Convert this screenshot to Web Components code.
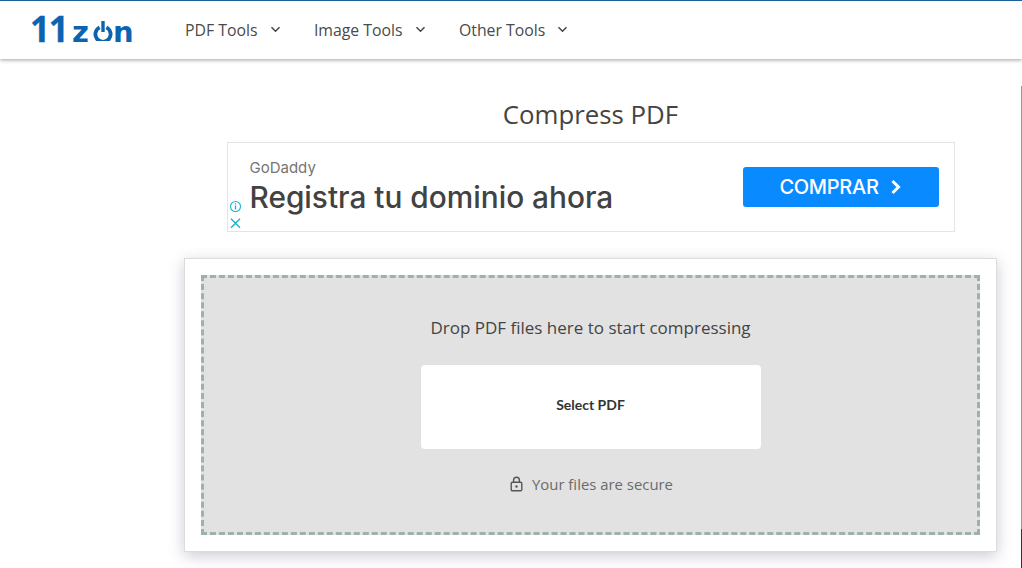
<!DOCTYPE html>
<html>
<head>
<meta charset="utf-8">
<title>Compress PDF</title>
<style>
html, body { margin:0; height:100%; background:#fff; overflow:hidden; }
body { font-family:"Open Sans", sans-serif; color:#444; }
</style>
</head>
<body>
<app-page>
    <site-header slot="header">
        <nav-item>PDF Tools</nav-item>
        <nav-item>Image Tools</nav-item>
        <nav-item>Other Tools</nav-item>
    </site-header>
    <ad-banner brand="GoDaddy" headline="Registra tu dominio ahora" action="COMPRAR"></ad-banner>
    <drop-card
        prompt="Drop PDF files here to start compressing"
        button="Select PDF"
        note="Your files are secure"></drop-card>
</app-page>

<script>
customElements.define('app-page', class extends HTMLElement {
    constructor() {
        super();
        this.attachShadow({ mode: 'open' }).innerHTML = `
        <style>
        :host { display:flex; flex-direction:column; height:568px; }
        #body { flex:1 1 auto; display:flex; min-height:0; }
        main { flex:1 1 auto; padding-left:184px; }
        #column { width:813px; display:flex; flex-direction:column; align-items:center; }
        h1 {
            margin:38px 0 0;
            height:45px;
            font:400 25.8px/34px "Open Sans", sans-serif;
            color:#444;
        }
        #edge { flex:0 0 1px; margin-top:27px; display:flex; flex-direction:column; }
        #green { flex:0 0 443px; background:#5dbb7e; }
        #dark { flex:1 1 auto; background:#2b3440; }
        </style>
        <slot name="header"></slot>
        <div id="body">
            <main><div id="column">
                <h1>Compress PDF</h1>
                <slot></slot>
            </div></main>
            <div id="edge"><div id="green"></div><div id="dark"></div></div>
        </div>`;
    }
});

customElements.define('site-header', class extends HTMLElement {
    constructor() {
        super();
        this.attachShadow({ mode: 'open' }).innerHTML = `
        <style>
        :host {
            display:flex;
            align-items:center;
            box-sizing:border-box;
            height:59px;
            flex:0 0 auto;
            padding-left:31px;
            border-top:1px solid #1d5f97;
            background:#fff;
            box-shadow:0 1px 4px rgba(0,0,0,.38);
            position:relative;
        }
        #logo {
            display:flex;
            align-items:baseline;
            width:154px;
            color:#0c63b0;
        }
        #digits { font:700 35px/40px "Open Sans", sans-serif; letter-spacing:-1.2px; width:42px; margin-left:-1px; -webkit-text-stroke:.3px #0c63b0; }
        .low { font:700 29px/40px "DejaVu Sans", sans-serif; }
        #logo svg { align-self:flex-start; margin:12px 0 0 4px; }
        #links { display:flex; gap:33.3px; }
        </style>
        <div id="logo">
            <span id="digits">11</span>
            <span class="low">z</span>
            <svg width="20" height="20" viewBox="0 0 20 20" aria-hidden="true">
                <path d="M6.6 6.4a7.6 7.6 0 1 0 6.8 0" fill="none" stroke="#0c63b0" stroke-width="3.8"/>
                <path d="M10 0v11" stroke="#0c63b0" stroke-width="3.4" fill="none"/>
            </svg>
            <span class="low">n</span>
        </div>
        <div id="links"><slot></slot></div>`;
    }
});

customElements.define('nav-item', class extends HTMLElement {
    constructor() {
        super();
        this.attachShadow({ mode: 'open' }).innerHTML = `
        <style>
        :host {
            display:inline-flex;
            align-items:center;
            gap:12px;
            font:400 15.84px/22px "Open Sans", sans-serif;
            color:#4a4a4a;
        }
        svg { margin-top:-2px; }
        </style>
        <slot></slot>
        <svg width="11" height="7" viewBox="0 0 11 7" aria-hidden="true">
            <path d="M1.5 1.2 5.5 5.2 9.5 1.2" fill="none" stroke="#444" stroke-width="1.5"/>
        </svg>`;
    }
});

customElements.define('ad-banner', class extends HTMLElement {
    constructor() {
        super();
        this.attachShadow({ mode: 'open' }).innerHTML = `
        <style>
        :host {
            display:flex;
            align-items:center;
            box-sizing:border-box;
            width:728px;
            height:90px;
            border:1px solid #e4e4e4;
            padding:0 15px 0 5px;
            background:#fff;
        }
        #marks { align-self:flex-end; display:flex; flex-direction:column; gap:5px; width:11px; padding-bottom:2px; margin-left:-4px; }
        #marks svg { display:block; }
        #text { flex:1 1 auto; padding-left:10px; margin-top:-1px; }
        #brand { font:400 15px/20px Inter, Lato, sans-serif; color:#757575; }
        #headline { font:500 29.8px/38px Inter, Lato, sans-serif; color:#424242; }
        button {
            all:unset;
            box-sizing:border-box;
            width:196px;
            height:40px;
            display:flex;
            align-items:center;
            justify-content:center;
            gap:11px;
            background:#0a8aff;
            border-radius:3px;
            color:#fff;
            font:500 20px/24px Inter, Lato, sans-serif;
            letter-spacing:-.3px;
        }
        </style>
        <div id="marks">
            <svg width="13" height="13" viewBox="0 0 13 13" aria-hidden="true">
                <circle cx="6.5" cy="6.5" r="5" fill="none" stroke="#1cb0d0" stroke-width="1.1"/>
                <path d="M6.5 5.6v4M6.5 3.2v1.3" stroke="#1cb0d0" stroke-width="1.3"/>
            </svg>
            <svg width="13" height="11" viewBox="0 0 13 11" aria-hidden="true">
                <path d="M2 .8l9 9M11 .8l-9 9" stroke="#1cb0d0" stroke-width="1.4"/>
            </svg>
        </div>
        <div id="text">
            <div id="brand">${this.getAttribute('brand')}</div>
            <div id="headline">${this.getAttribute('headline')}</div>
        </div>
        <button>
            <span>${this.getAttribute('action')}</span>
            <svg width="12" height="16" viewBox="0 0 12 16" aria-hidden="true">
                <path d="M2.5 2 8.5 8 2.5 14" fill="none" stroke="#fff" stroke-width="3"/>
            </svg>
        </button>`;
    }
});

customElements.define('drop-card', class extends HTMLElement {
    constructor() {
        super();
        this.attachShadow({ mode: 'open' }).innerHTML = `
        <style>
        :host {
            display:block;
            box-sizing:border-box;
            width:813px;
            height:294px;
            margin-top:26px;
            padding:16px;
            background:#fff;
            border:1px solid #dcdcdc;
            box-shadow:0 4px 14px rgba(70,70,110,.28);
        }
        #zone {
            box-sizing:border-box;
            height:100%;
            display:flex;
            flex-direction:column;
            align-items:center;
            background:#e2e2e2;
            border:3px dashed #9fb1ae;
            padding-top:38px;
        }
        #prompt { font:400 17px/24px "Open Sans", sans-serif; color:#444; }
        button {
            all:unset;
            box-sizing:border-box;
            width:340px;
            height:84px;
            margin-top:25px;
            padding-bottom:4px;
            display:flex;
            align-items:center;
            justify-content:center;
            background:#fff;
            border-radius:4px;
            font:700 14px/18px Lato, sans-serif;
            color:#333;
        }
        #note {
            margin:24px 0 0 2px;
            display:flex;
            align-items:center;
            gap:9px;
            font:400 14.9px/22px "Open Sans", sans-serif;
            color:#6a6a6a;
        }
        </style>
        <div id="zone">
            <div id="prompt">${this.getAttribute('prompt')}</div>
            <button>${this.getAttribute('button')}</button>
            <div id="note">
                <svg width="13" height="16" viewBox="0 0 13 16" aria-hidden="true">
                    <rect x="1.2" y="6.2" width="10.6" height="8.6" rx="1.2" fill="none" stroke="#555" stroke-width="1.4"/>
                    <path d="M3.6 6V4.2a2.9 2.9 0 0 1 5.8 0V6" fill="none" stroke="#555" stroke-width="1.4"/>
                    <circle cx="6.5" cy="10.5" r="1.2" fill="#555"/>
                </svg>
                <span>${this.getAttribute('note')}</span>
            </div>
        </div>`;
    }
});
</script>
</body>
</html>
